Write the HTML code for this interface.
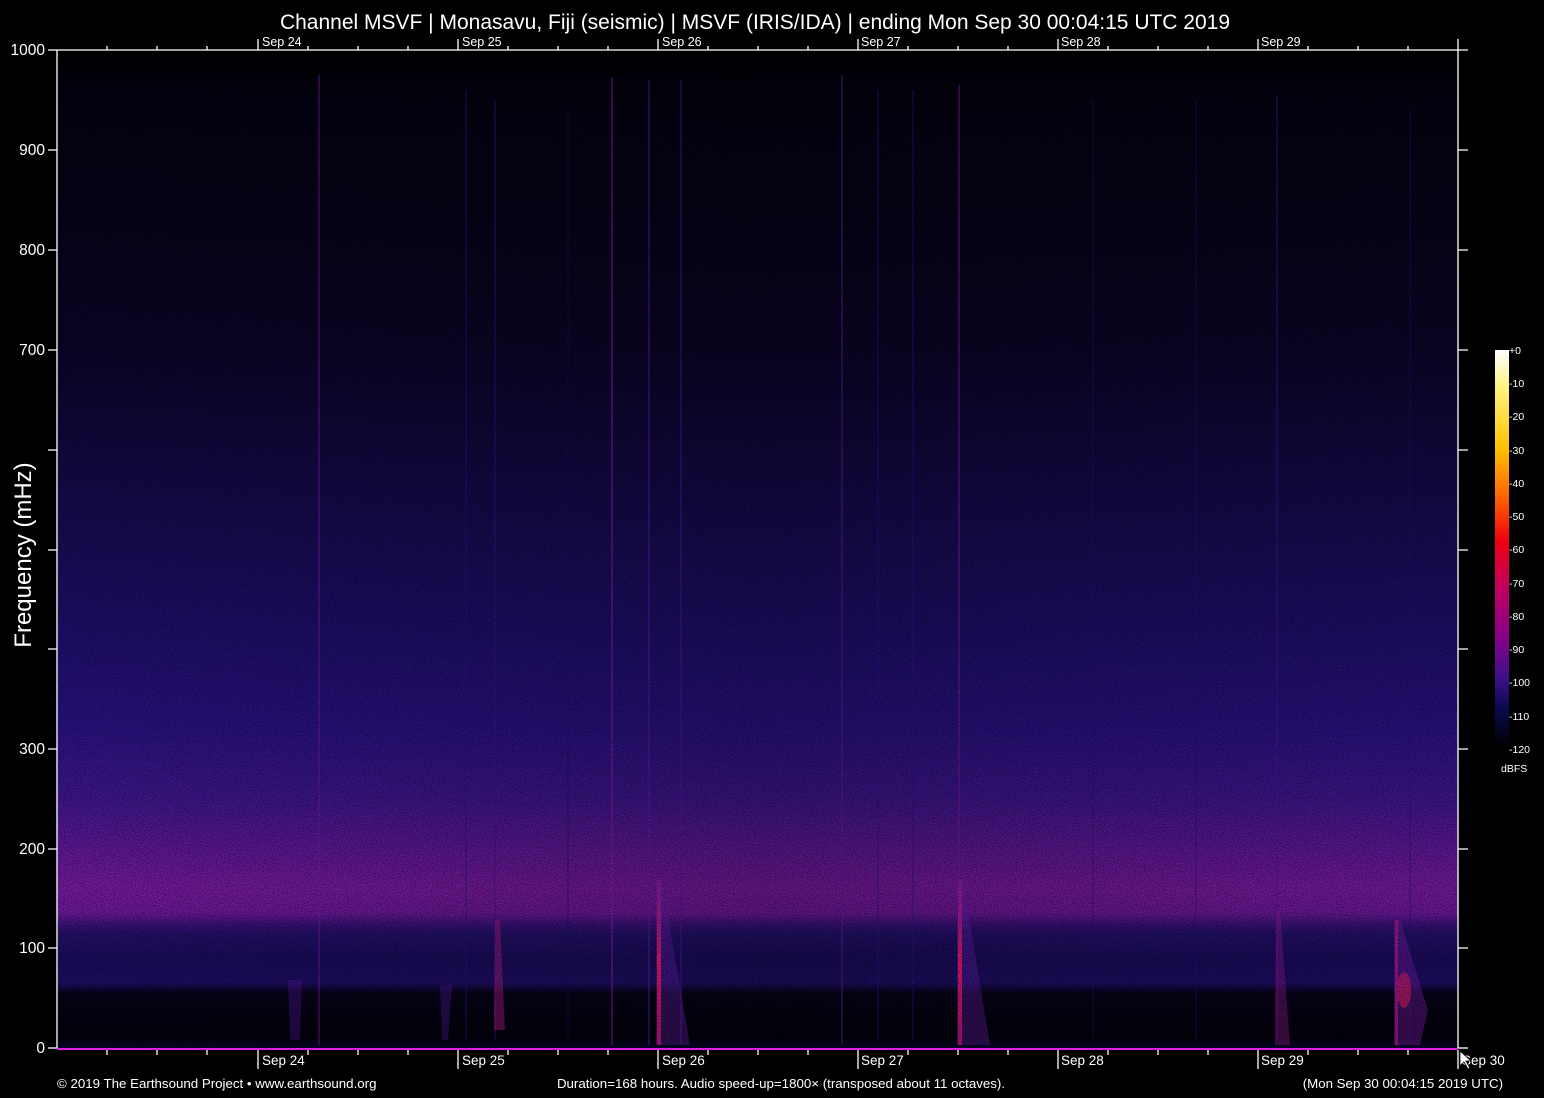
<!DOCTYPE html>
<html><head><meta charset="utf-8"><style>
html,body{margin:0;padding:0;background:#000;width:1544px;height:1098px;overflow:hidden}
svg{display:block}
text{font-family:"Liberation Sans",Arial,sans-serif;fill:#fff}
</style></head><body>
<svg width="1544" height="1098" viewBox="0 0 1544 1098" xmlns="http://www.w3.org/2000/svg">
<defs>
<linearGradient id="bg" x1="0" y1="49" x2="0" y2="1048" gradientUnits="userSpaceOnUse">
<stop offset="0" stop-color="#000000"/>
<stop offset="0.04" stop-color="#030210"/>
<stop offset="0.15" stop-color="#060318"/>
<stop offset="0.30" stop-color="#0b0528"/>
<stop offset="0.45" stop-color="#150a4c"/>
<stop offset="0.58" stop-color="#1e0e6a"/>
<stop offset="0.68" stop-color="#2a1282"/>
<stop offset="0.75" stop-color="#3e168c"/>
<stop offset="0.80" stop-color="#5e1896"/>
<stop offset="0.84" stop-color="#751a9c"/>
<stop offset="0.865" stop-color="#6c1898"/>
<stop offset="0.875" stop-color="#40127e"/>
<stop offset="0.885" stop-color="#24106a"/>
<stop offset="0.91" stop-color="#1a0b5c"/>
<stop offset="0.935" stop-color="#1e0d64"/>
<stop offset="0.945" stop-color="#060318"/>
<stop offset="0.99" stop-color="#02010a"/>
<stop offset="1" stop-color="#0a0430"/>
</linearGradient>
<linearGradient id="side" x1="57" y1="0" x2="1458" y2="0" gradientUnits="userSpaceOnUse">
<stop offset="0" stop-color="#000" stop-opacity="0"/>
<stop offset="0.5" stop-color="#000" stop-opacity="0.15"/>
<stop offset="1" stop-color="#000" stop-opacity="0.05"/>
</linearGradient>
<linearGradient id="cb" x1="0" y1="350" x2="0" y2="748" gradientUnits="userSpaceOnUse">
<stop offset="0" stop-color="#ffffff"/>
<stop offset="0.1" stop-color="#fff27a"/>
<stop offset="0.25" stop-color="#ffc000"/>
<stop offset="0.38" stop-color="#ff5a00"/>
<stop offset="0.48" stop-color="#f00010"/>
<stop offset="0.6" stop-color="#c00060"/>
<stop offset="0.72" stop-color="#880088"/>
<stop offset="0.82" stop-color="#40108a"/>
<stop offset="0.9" stop-color="#0a0a50"/>
<stop offset="1" stop-color="#000000"/>
</linearGradient>
<linearGradient id="red" x1="0" y1="880" x2="0" y2="1045" gradientUnits="userSpaceOnUse">
<stop offset="0" stop-color="#8a1a9a" stop-opacity="0.6"/>
<stop offset="0.5" stop-color="#d01860"/>
<stop offset="1" stop-color="#a01070"/>
</linearGradient>
<filter id="noise" x="0" y="0" width="100%" height="100%">
<feTurbulence type="fractalNoise" baseFrequency="0.9" numOctaves="1" seed="3"/>
<feColorMatrix type="matrix" values="0 0 0 0 0  0 0 0 0 0  0 0 0 0 0  0 0 0 -2.6 1.5"/>
</filter>
</defs>

<text x="755" y="29" font-size="21" text-anchor="middle">Channel MSVF | Monasavu, Fiji (seismic) | MSVF (IRIS/IDA) | ending Mon Sep 30 00:04:15 UTC 2019</text>

<rect x="57" y="50" width="1401" height="998" fill="url(#bg)"/>
<rect x="57" y="50" width="1401" height="998" fill="url(#side)"/>

<g stroke-width="1.5">
<line x1="319" y1="75" x2="319" y2="1045" stroke="#6a1aa0" stroke-opacity="0.6"/>
<line x1="612" y1="78" x2="612" y2="1045" stroke="#7a1a9a" stroke-opacity="0.7"/>
<line x1="649" y1="80" x2="649" y2="1045" stroke="#5a18a0" stroke-opacity="0.6"/>
<line x1="681" y1="80" x2="681" y2="1045" stroke="#4a1590" stroke-opacity="0.6"/>
<line x1="842" y1="75" x2="842" y2="1045" stroke="#5a1a90" stroke-opacity="0.6"/>
<line x1="959" y1="85" x2="959" y2="1045" stroke="#6a1890" stroke-opacity="0.7"/>
<line x1="1277" y1="95" x2="1277" y2="1040" stroke="#4a1590" stroke-opacity="0.5"/>
<line x1="466" y1="90" x2="466" y2="1040" stroke="#2a1080" stroke-opacity="0.5"/>
<line x1="495" y1="100" x2="495" y2="1040" stroke="#3a1285" stroke-opacity="0.5"/>
<line x1="878" y1="90" x2="878" y2="1040" stroke="#2a1080" stroke-opacity="0.5"/>
<line x1="913" y1="90" x2="913" y2="1040" stroke="#2a1080" stroke-opacity="0.5"/>
<line x1="1093" y1="100" x2="1093" y2="1040" stroke="#221070" stroke-opacity="0.4"/>
<line x1="1196" y1="100" x2="1196" y2="1040" stroke="#221070" stroke-opacity="0.4"/>
<line x1="1410" y1="110" x2="1410" y2="1040" stroke="#221070" stroke-opacity="0.4"/>
<line x1="568" y1="110" x2="568" y2="1040" stroke="#1a0c60" stroke-opacity="0.4"/>
</g>
<path d="M656 880 L662 880 L690 1045 L656 1045 Z" fill="#5a1a9a" opacity="0.45"/>
<rect x="657" y="880" width="4" height="165" fill="url(#red)"/>
<path d="M957 880 L963 880 L990 1045 L957 1045 Z" fill="#5a1a9a" opacity="0.45"/>
<rect x="958" y="880" width="4" height="165" fill="url(#red)"/>
<path d="M1394 920 L1400 920 L1428 1010 L1420 1045 L1394 1045 Z" fill="#6a1a9a" opacity="0.5"/>
<ellipse cx="1404" cy="990" rx="7" ry="18" fill="#c01860" opacity="0.7"/>
<rect x="1395" y="920" width="3" height="125" fill="#a01880" opacity="0.8"/>
<path d="M495 920 L500 920 L505 1030 L494 1030 Z" fill="#a01a80" opacity="0.5"/>
<path d="M1276 910 L1280 910 L1290 1045 L1275 1045 Z" fill="#8a1890" opacity="0.45"/>
<path d="M288 980 L302 980 L300 1040 L290 1040 Z" fill="#4a1590" opacity="0.45"/>
<path d="M440 985 L452 985 L448 1040 L442 1040 Z" fill="#4a1590" opacity="0.45"/>
<rect x="57" y="50" width="1401" height="998" filter="url(#noise)" opacity="0.6"/>

<g stroke="#fff" stroke-width="1.3" fill="none">
<line x1="48" y1="50" x2="1468" y2="50"/>
<line x1="57" y1="50" x2="57" y2="1048"/>
<line x1="1458" y1="50" x2="1458" y2="1048"/>
<line x1="48" y1="1048" x2="57" y2="1048"/>
<line x1="1458" y1="1048" x2="1468" y2="1048"/>
</g>
<line x1="57" y1="1049" x2="1458" y2="1049" stroke="#e020e0" stroke-width="2"/>
<g stroke="#fff" stroke-width="1.3">
<path d="M48 150H57M48 250H57M48 350H57M48 450H57M48 550H57M48 649H57M48 749H57M48 849H57M48 948H57"/>
<path d="M1458 150H1468M1458 250H1468M1458 350H1468M1458 450H1468M1458 550H1468M1458 649H1468M1458 749H1468M1458 849H1468M1458 948H1468"/>
<path d="M107 50V46M157 50V46M207 50V46M308 50V46M358 50V46M408 50V46M508 50V46M558 50V46M608 50V46M708 50V46M758 50V46M808 50V46M908 50V46M958 50V46M1008 50V46M1108 50V46M1158 50V46M1208 50V46M1308 50V46M1358 50V46M1408 50V46"/>
<path d="M258 50V39M458 50V39M658 50V39M858 50V39M1058 50V39M1258 50V39M1458 50V39"/>
<path d="M107 1050V1055M157 1050V1055M207 1050V1055M308 1050V1055M358 1050V1055M408 1050V1055M508 1050V1055M558 1050V1055M608 1050V1055M708 1050V1055M758 1050V1055M808 1050V1055M908 1050V1055M958 1050V1055M1008 1050V1055M1108 1050V1055M1158 1050V1055M1208 1050V1055M1308 1050V1055M1358 1050V1055M1408 1050V1055"/>
<path d="M258 1050V1069M458 1050V1069M658 1050V1069M858 1050V1069M1058 1050V1069M1258 1050V1069M1458 1050V1069"/>
</g>
<g font-size="12.5">
<text x="262" y="46">Sep 24</text><text x="462" y="46">Sep 25</text><text x="662" y="46">Sep 26</text>
<text x="861" y="46">Sep 27</text><text x="1061" y="46">Sep 28</text><text x="1261" y="46">Sep 29</text>
</g>
<g font-size="13.5">
<text x="262" y="1065">Sep 24</text><text x="462" y="1065">Sep 25</text><text x="662" y="1065">Sep 26</text>
<text x="861" y="1065">Sep 27</text><text x="1061" y="1065">Sep 28</text><text x="1261" y="1065">Sep 29</text>
<text x="1462" y="1065">Sep 30</text>
</g>
<path d="M1460 1051 L1460 1066 L1464 1062 L1468 1069 L1470 1068 L1466 1061 L1471 1061 Z" fill="#fff" stroke="#000" stroke-width="0.8"/>
<g font-size="15.5" text-anchor="end">
<text x="45" y="55">1000</text><text x="45" y="155">900</text><text x="45" y="255">800</text>
<text x="45" y="355">700</text><text x="45" y="754">300</text><text x="45" y="854">200</text>
<text x="45" y="953">100</text><text x="45" y="1053">0</text>
</g>
<text transform="translate(31,555) rotate(-90)" font-size="24" text-anchor="middle">Frequency (mHz)</text>

<rect x="1495" y="350" width="14" height="398" fill="url(#cb)"/>
<g font-size="10.5" fill="#ddd">
<text x="1509" y="354">+0</text><text x="1509" y="387">-10</text><text x="1509" y="420">-20</text>
<text x="1509" y="454">-30</text><text x="1509" y="487">-40</text><text x="1509" y="520">-50</text>
<text x="1509" y="553">-60</text><text x="1509" y="587">-70</text><text x="1509" y="620">-80</text>
<text x="1509" y="653">-90</text><text x="1509" y="686">-100</text><text x="1509" y="720">-110</text>
<text x="1509" y="753">-120</text><text x="1501" y="772">dBFS</text>
</g>

<g font-size="13.3">
<text x="57" y="1088">© 2019 The Earthsound Project • www.earthsound.org</text>
<text x="781" y="1088" text-anchor="middle">Duration=168 hours. Audio speed-up=1800× (transposed about 11 octaves).</text>
<text x="1503" y="1088" text-anchor="end">(Mon Sep 30 00:04:15 2019 UTC)</text>
</g>
</svg>
</body></html>
